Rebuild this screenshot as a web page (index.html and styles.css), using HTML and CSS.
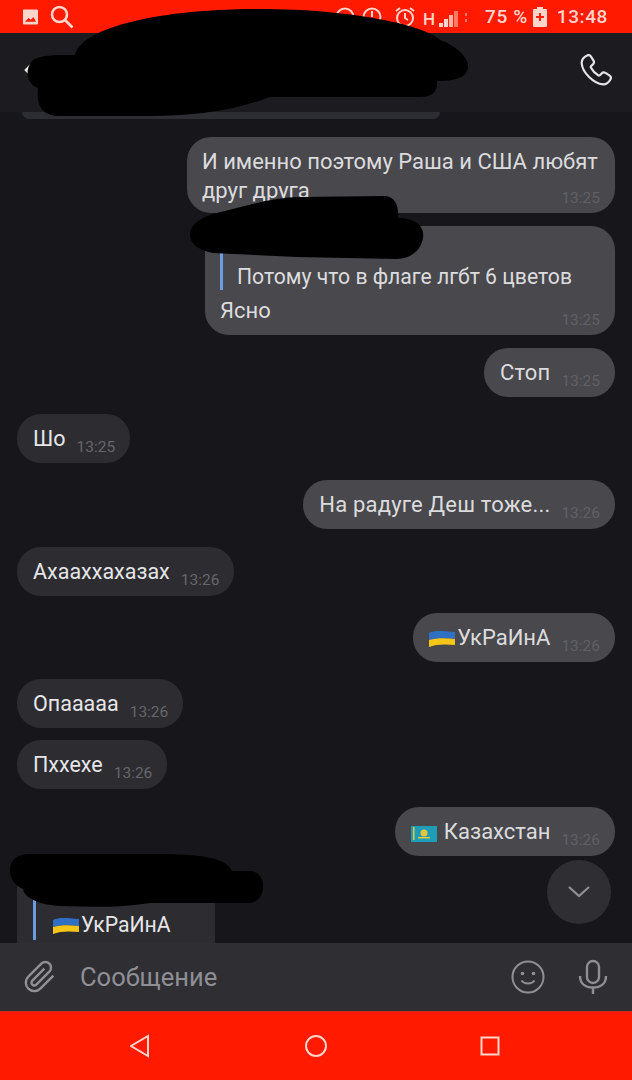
FILE: index.html
```html
<!DOCTYPE html>
<html lang="ru">
<head>
    <meta charset="UTF-8">
    <meta name="viewport" content="width=device-width, initial-scale=1.0">
    <title>Чат</title>
    <link rel="stylesheet" href="styles.css">
</head>
<body>

<div class="phone">
    <div class="status-bar">
        <div class="status-left">
            <svg class="icon-image" viewBox="0 0 16 16"><path fill="#ffd5cc" fill-rule="evenodd" d="M1 0h14a1 1 0 0 1 1 1v14a1 1 0 0 1-1 1H1a1 1 0 0 1-1-1V1a1 1 0 0 1 1-1zM2 13h12l-3-5-2.5 3L6 9z"/></svg>
            <svg class="icon-search" viewBox="0 0 24 24"><circle cx="9.5" cy="9.5" r="7.5"/><path d="M15 15l7.5 7.5"/></svg>
        </div>
        <div class="status-right">
            <svg class="icon-ring" viewBox="0 0 20 20"><circle cx="10" cy="10" r="8.5"/></svg>
            <svg class="icon-ring" viewBox="0 0 20 20"><circle cx="10" cy="10" r="8.5"/><path d="M10 4v6"/></svg>
            <svg class="icon-alarm" viewBox="0 0 22 22"><circle cx="11" cy="12" r="8"/><path d="M11 7v5l3 2M2 5l4-3M20 5l-4-3"/></svg>
            <span class="net">H</span>
            <svg class="icon-signal" viewBox="0 0 30 16"><rect x="0" y="12" width="4" height="4" fill="#ffd5cc"/><rect x="5" y="8" width="4" height="8" fill="#ffd5cc"/><rect x="10" y="4" width="4" height="12" fill="#ffb3a3"/><rect x="15" y="0" width="4" height="16" fill="#ff7a63"/><rect x="26" y="2" width="2" height="3" fill="#ff7a63"/><rect x="26" y="8" width="2" height="3" fill="#ff7a63"/></svg>
            <span class="battery-text">75 %</span>
            <svg class="icon-battery" viewBox="0 0 14 20"><path fill="#ffd5cc" d="M4 0h6v2h3a1 1 0 0 1 1 1v16a1 1 0 0 1-1 1H1a1 1 0 0 1-1-1V3a1 1 0 0 1 1-1h3z"/><path fill="#ff1a00" d="M6 6h2v3h3v2H8v3H6v-3H3V9h3z"/></svg>
            <span class="clock">13:48</span>
        </div>
    </div>

    <header class="chat-header">
        <svg class="icon-back" viewBox="0 0 12 20"><path d="M10 2l-8 8 8 8"/></svg>
        <svg class="icon-phone" viewBox="0 0 32 32"><path d="M7 1.500c1.500-.8 3.100-.3 4 1.100l2.500 4c.8 1.300.5 2.800-.6 3.800l-1.600 1.400c-.6.5-.7 1.300-.3 2 1.800 3.400 3.900 5.700 7.200 7.500.7.4 1.500.2 2-.4l1.400-1.500c1-1.100 2.600-1.300 3.900-.5l3.900 2.500c1.400.9 1.800 2.700 1 4.100-1.300 2.400-3.700 5-7.400 4.900C13.500 29.500 2.500 18.500 1.700 9.500 1.400 6 4 3 7 1.500z"/></svg>
    </header>

    <main class="chat">
        <div class="sliver"></div>

        <div class="bubble out wrapped">
            <span class="text">И именно поэтому Раша и США любят друг друга</span>
            <span class="time">13:25</span>
        </div>

        <div class="bubble out replied">
            <div class="quote">
                <span class="quote-name"></span>
                <span class="quote-text">Потому что в флаге лгбт 6 цветов</span>
            </div>
            <span class="text">Ясно</span>
            <span class="time">13:25</span>
        </div>

        <div class="bubble out close">
            <span class="text loose">Стоп</span>
            <span class="time">13:25</span>
        </div>

        <div class="bubble in">
            <span class="text">Шо</span>
            <span class="time">13:25</span>
        </div>

        <div class="bubble out">
            <span class="text loose">На радуге Деш тоже...</span>
            <span class="time">13:26</span>
        </div>

        <div class="bubble in">
            <span class="text">Ахааххахазах</span>
            <span class="time">13:26</span>
        </div>

        <div class="bubble out">
            <span class="text">
                <svg class="flag" viewBox="0 0 26 18"><path fill="#2f6fc4" d="M0 3c6-3 13-2 26-1v7C16 8 7 8 0 10z"/><path fill="#f5c518" d="M0 10c7-2 16-2 26-1v6c-10-1-19-1-26 2z"/></svg>УкРаИнА
            </span>
            <span class="time">13:26</span>
        </div>

        <div class="bubble in">
            <span class="text">Опааааа</span>
            <span class="time">13:26</span>
        </div>

        <div class="bubble in close">
            <span class="text">Пххехе</span>
            <span class="time">13:26</span>
        </div>

        <div class="bubble out">
            <span class="text wide-gap">
                <svg class="flag" viewBox="0 0 26 18"><path fill="#1f9cb8" d="M0 2h26v16H0z"/><circle cx="13" cy="9" r="3.500" fill="#e8c53a"/><path fill="#e8c53a" d="M7 13h12v1.500H7zM2 3h1.500v13H2z"/></svg>Казахстан
            </span>
            <span class="time">13:26</span>
        </div>

        <div class="reply-card">
            <div class="quote">
                <span class="quote-name"></span>
                <span class="quote-text">
                    <svg class="flag" viewBox="0 0 26 18"><path fill="#2f6fc4" d="M0 3c6-3 13-2 26-1v7C16 8 7 8 0 10z"/><path fill="#f5c518" d="M0 10c7-2 16-2 26-1v6c-10-1-19-1-26 2z"/></svg>УкРаИнА
                </span>
            </div>
        </div>
    </main>

    <div class="input-bar">
        <svg class="icon-clip" viewBox="0 0 24 24"><path d="M21.440 11.050l-9.190 9.190a6 6 0 0 1-8.490-8.490l9.190-9.190a4 4 0 0 1 5.660 5.660l-9.200 9.190a2 2 0 0 1-2.830-2.830l8.490-8.480"/></svg>
        <span class="placeholder">Сообщение</span>
        <svg class="icon-smile" viewBox="0 0 34 34"><circle cx="17" cy="17" r="15.500"/><circle class="dot" cx="11.500" cy="13.500" r="1.800"/><circle class="dot" cx="22.500" cy="13.500" r="1.800"/><path d="M10.500 20.500c3 4 10 4 13 0"/></svg>
        <svg class="icon-mic" viewBox="0 0 30 36"><rect x="9" y="2" width="12" height="22" rx="6"/><path d="M2 17c0 8 6 11.500 13 11.500S28 25 28 17M15 28.500V35"/></svg>
    </div>

    <nav class="nav-bar">
        <svg class="nav-icon" viewBox="0 0 24 24"><path d="M18 2v20L1 12z"/></svg>
        <svg class="nav-icon" viewBox="0 0 24 24"><circle cx="12" cy="12" r="10"/></svg>
        <svg class="nav-icon" viewBox="0 0 24 24"><rect x="3.500" y="3.500" width="17" height="17"/></svg>
    </nav>

    <button class="scroll-down">
        <svg viewBox="0 0 24 12"><path d="M2 1l10 9 10-9"/></svg>
    </button>

    <!-- закрашенные имена -->
    <svg class="scribbles" viewBox="0 0 632 1080">
        <path d="M75 55C80 30 150 9 260 9C350 9 425 25 440 40C455 45 470 58 468 68C466 78 455 81 437 81C438 92 432 97 420 97L270 97C230 112 190 116 150 116L60 116C42 116 36 105 38 88C28 85 25 72 30 64C35 54 55 55 75 55Z"/>
        <path d="M190 233C192 222 205 215 225 211C250 205 275 197 300 197L385 196C395 197 399 205 398 218C415 218 425 226 423 238C421 250 412 258 397 259L297 257L213 253C198 250 189 243 190 233Z"/>
        <path d="M10 870C10 860 17 854 30 854L167 854C200 855 225 857 232 871L252 871C260 873 264 880 263 888C262 898 256 903 248 903L150 903C120 908 90 907 60 906C40 905 24 898 23 889C14 885 10 878 10 870Z"/>
    </svg>
</div>

</body>
</html>
```

FILE: styles.css
```css
body {
    margin: 0;
    background: #17171b;
    font-family: Roboto, "Liberation Sans", sans-serif;
}
.phone {
    position: relative;
    width: 632px;
    height: 1080px;
    display: flex;
    flex-direction: column;
    overflow: hidden;
}

/* status bar */
.status-bar {
    height: 33px;
    flex: none;
    background: #ff1a00;
    color: #ffd5cc;
    display: flex;
    justify-content: space-between;
    align-items: center;
    padding: 0 24px 0 23px;
    font-size: 19px;
    font-weight: 500;
}
.status-left, .status-right {
    display: flex;
    align-items: center;
}
.icon-image {
    width: 15px;
    height: 16px;
}
.icon-search {
    width: 24px;
    height: 24px;
    margin-left: 12px;
    fill: none;
    stroke: #ffd5cc;
    stroke-width: 2.6;
}
.icon-ring {
    width: 20px;
    height: 20px;
    margin-right: 7px;
    fill: none;
    stroke: #ffd5cc;
    stroke-width: 2;
}
.icon-alarm {
    width: 22px;
    height: 22px;
    margin-left: 5px;
    fill: none;
    stroke: #ffd5cc;
    stroke-width: 2;
}
.net {
    font-size: 17px;
    margin: 4px 0 0 7px;
}
.icon-signal {
    width: 30px;
    height: 16px;
    margin: 4px 0 0 4px;
}
.battery-text {
    margin-left: 16px;
    letter-spacing: 0.6px;
}
.icon-battery {
    width: 14px;
    height: 20px;
    margin-left: 5px;
}
.clock {
    margin-left: 10px;
    letter-spacing: 0.6px;
}

/* header */
.chat-header {
    height: 79px;
    flex: none;
    box-sizing: border-box;
    background: #1c1c20;
    display: flex;
    justify-content: space-between;
    align-items: center;
    padding: 0 20px 6px 24px;
}
.icon-back {
    width: 12px;
    height: 20px;
    fill: none;
    stroke: #e8e8e8;
    stroke-width: 2.5;
}
.icon-phone {
    width: 32px;
    height: 32px;
    fill: none;
    stroke: #e4e4e6;
    stroke-width: 2.2;
}

/* messages */
.chat {
    flex: 1;
    min-height: 0;
    background: #17171b;
    display: flex;
    flex-direction: column;
    padding: 0 17px;
    overflow: hidden;
}
.sliver {
    flex: none;
    width: 418px;
    height: 7px;
    margin-left: 5px;
    background: #2d2e33;
    border-radius: 0 0 18px 18px;
}
.bubble {
    flex: none;
    display: flex;
    align-items: flex-start;
    box-sizing: border-box;
    height: 49px;
    margin-top: 17.2px;
    padding: 12px 15px 0 16px;
    border-radius: 24px;
    font-size: 22px;
    line-height: 26px;
}
.bubble.in {
    align-self: flex-start;
    background: #2c2c31;
    color: #e6e6e8;
    font-size: 21.5px;
}
.bubble.out {
    align-self: flex-end;
    background: #48484d;
    color: #dcdcde;
}
.bubble.out.close {
    margin-top: 13px;
}
.bubble.in.close {
    margin-top: 12.5px;
}
.loose {
    letter-spacing: 0.2px;
}
.time {
    flex: none;
    margin: 11px 0 0 11px;
    font-size: 15.5px;
    line-height: 20px;
    color: #66666b;
}
.bubble.out .time {
    color: #606065;
}
.wrapped, .replied {
    display: block;
    height: auto;
}
.replied .text, .wrapped .time, .replied .time {
    display: block;
}
.wrapped .time, .replied .time {
    text-align: right;
}
.wrapped {
    width: 428px;
    margin-top: 18px;
    padding: 10px 15px 5px;
    line-height: 29px;
}
.wrapped .time {
    margin: -17px 0 0;
}
.replied {
    width: 410px;
    margin-top: 13px;
    padding: 11px 15px 5px;
}
.replied .time {
    margin: -14px 0 0;
}
.quote {
    border-left: 3px solid #6d9ce0;
    padding-left: 14px;
    margin-bottom: 8px;
    font-size: 21.2px;
}
.quote-name {
    display: block;
    height: 27px;
}
.quote-text {
    display: block;
    white-space: nowrap;
}
.flag {
    width: 26px;
    height: 18px;
    vertical-align: -3px;
    margin-right: 2px;
}
.wide-gap .flag {
    margin-right: 7px;
}
.reply-card {
    flex: none;
    width: 198px;
    height: 90px;
    box-sizing: border-box;
    margin-top: 6px;
    padding: 28px 0 0 16px;
    background: #2c2c31;
    border-radius: 24px 24px 0 0;
    color: #e6e6e8;
    line-height: 26px;
}
.reply-card .quote {
    padding: 0 0 2px 17px;
}
.reply-card .quote-name {
    height: 22px;
}

/* input */
.input-bar {
    height: 68px;
    flex: none;
    background: #2e2e33;
    display: flex;
    align-items: center;
    padding: 0 24px 0 23px;
}
.input-bar svg {
    fill: none;
    stroke: #8f8f94;
}
.icon-clip {
    width: 34px;
    height: 34px;
    stroke-width: 1.7;
}
.placeholder {
    flex: 1;
    margin-left: 23px;
    font-size: 25.5px;
    color: #8f8f95;
}
.icon-smile {
    width: 34px;
    height: 34px;
    stroke-width: 2;
}
.icon-smile .dot {
    fill: #8f8f94;
    stroke: none;
}
.icon-mic {
    width: 30px;
    height: 36px;
    margin-left: 33px;
    stroke-width: 2.4;
}

/* nav */
.nav-bar {
    height: 69px;
    flex: none;
    box-sizing: border-box;
    background: #ff1a00;
    border-top: 1px solid #cf2a1c;
    display: flex;
    align-items: center;
    justify-content: space-between;
    padding: 0 130px;
}
.nav-icon {
    width: 24px;
    height: 24px;
    fill: none;
    stroke: #ffd5cc;
    stroke-width: 2;
}

.scroll-down {
    position: absolute;
    left: 547px;
    top: 860px;
    width: 64px;
    height: 64px;
    padding: 0;
    border: none;
    border-radius: 50%;
    background: #2e2e33;
    display: flex;
    align-items: center;
    justify-content: center;
}
.scroll-down svg {
    width: 24px;
    height: 12px;
    fill: none;
    stroke: #8f8f94;
    stroke-width: 2.2;
}
.scribbles {
    position: absolute;
    left: 0;
    top: 0;
    width: 632px;
    height: 1080px;
    fill: #000;
    pointer-events: none;
}
```
